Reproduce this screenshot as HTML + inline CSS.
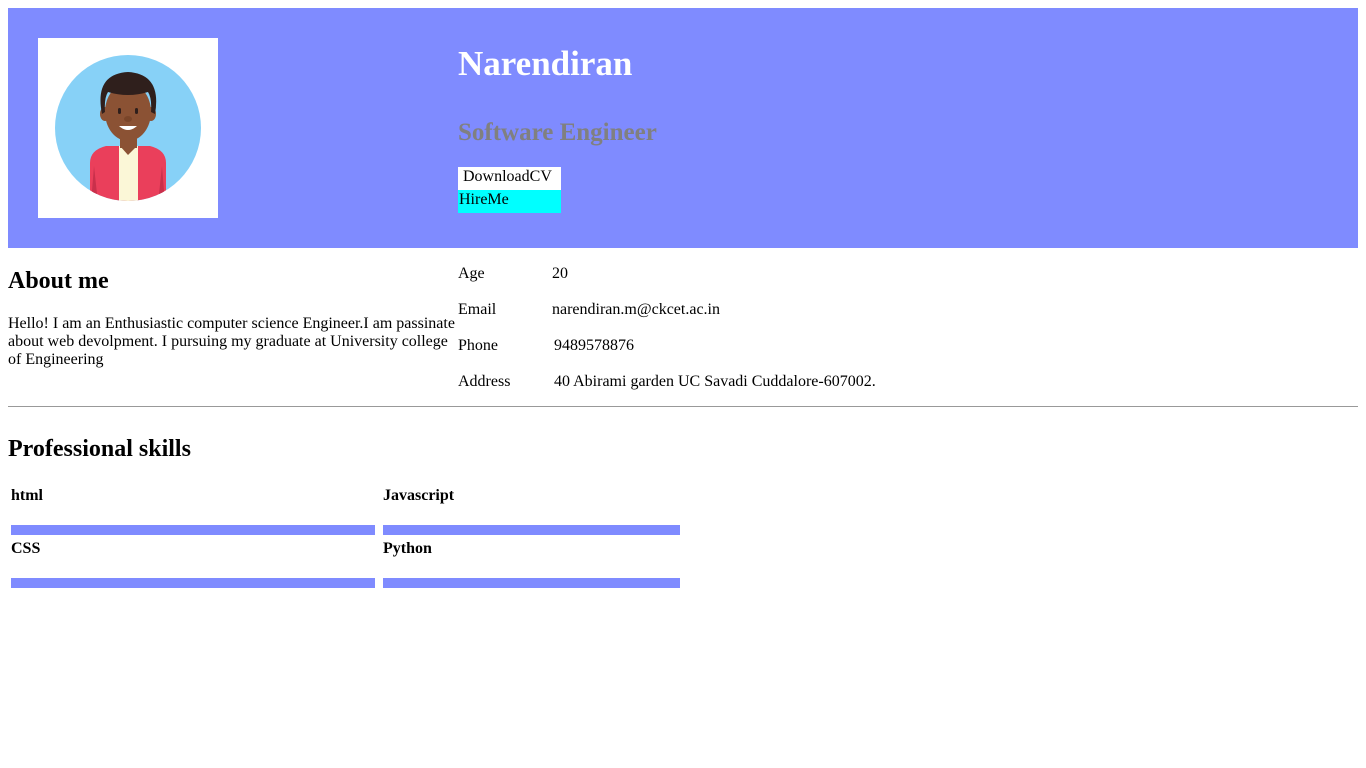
<!DOCTYPE html>
<html><head><style>
body{margin:0;font-family:"Liberation Serif",serif;font-size:16px;color:#000;background:#fff;width:1366px;height:768px;position:relative;overflow:hidden}
.a{position:absolute;white-space:nowrap;margin:0}
.bar{position:absolute;height:10px;background:#7f8bff}
</style></head><body>
<div class="a" style="left:8px;top:8px;width:1350px;height:240px;background:#7f8bff"></div>
<div class="a" style="left:38px;top:38px;width:180px;height:180px;background:#fff">
<svg width="180" height="180" viewBox="0 0 180 180">
<defs><clipPath id="c"><circle cx="90" cy="90" r="73"/></clipPath></defs>
<circle cx="90" cy="90" r="73" fill="#87d1f7"/>
<g clip-path="url(#c)">
<path d="M52 125 Q52 112 68 108 L112 108 Q128 112 128 125 L128 170 L52 170Z" fill="#ea3f5b"/>
<rect x="81" y="108" width="19" height="70" fill="#fbf7d7"/>
<rect x="82" y="92" width="17" height="18" fill="#8b5234"/>
<path d="M82 108 L90 117 L99 108" fill="#8b5234"/>
<path d="M56 128 L60 165 L53 165Z M124 128 L120 165 L127 165Z" fill="#c9304b"/>
</g>
<ellipse cx="67" cy="76" rx="5" ry="7" fill="#8b5234"/>
<ellipse cx="113" cy="76" rx="5" ry="7" fill="#8b5234"/>
<ellipse cx="90" cy="74" rx="23" ry="29" fill="#8b5234"/>
<path d="M64 76 Q56 36 90 34 Q124 36 117 76 L113 74 Q114 60 110 54 Q90 60 70 54 Q66 60 67 74Z" fill="#2f1f1c"/>
<rect x="80" y="70" width="3" height="6" rx="1.5" fill="#2f1f1c"/><rect x="97" y="70" width="3" height="6" rx="1.5" fill="#2f1f1c"/>
<ellipse cx="90" cy="81" rx="4" ry="3" fill="#7a4529"/>
<path d="M81 88 Q90 96 99 88Z" fill="#fff"/>
</svg></div>
<h1 class="a" style="left:458px;top:44px;font-size:35px;color:#fff">Narendiran</h1>
<h2 class="a" style="left:458px;top:119px;font-size:25px;color:#808080">Software Engineer</h2>
<div class="a" style="left:458px;top:167px;width:103px;height:23px;background:#fff"><span style="position:absolute;left:5px;top:1px">DownloadCV</span></div>
<div class="a" style="left:458px;top:190px;width:103px;height:23px;background:#0ff"><span style="position:absolute;left:1px;top:1px">HireMe</span></div>

<h2 class="a" style="left:8px;top:268px;font-size:24px">About me</h2>
<p class="a" style="left:8px;top:315px;width:450px;white-space:normal;line-height:18px">Hello! I am an Enthusiastic computer science Engineer.I am passinate about web devolpment. I pursuing my graduate at University college of Engineering</p>

<div class="a" style="left:458px;top:265px">Age</div><div class="a" style="left:552px;top:265px">20</div>
<div class="a" style="left:458px;top:301px">Email</div><div class="a" style="left:552px;top:301px">narendiran.m@ckcet.ac.in</div>
<div class="a" style="left:458px;top:337px">Phone</div><div class="a" style="left:554px;top:337px">9489578876</div>
<div class="a" style="left:458px;top:373px">Address</div><div class="a" style="left:554px;top:373px">40 Abirami garden UC Savadi Cuddalore-607002.</div>

<div class="a" style="left:8px;top:406px;width:1350px;height:0;border-top:1px solid #999"></div>
<h2 class="a" style="left:8px;top:436px;font-size:24px">Professional skills</h2>
<b class="a" style="left:11px;top:487px">html</b>
<b class="a" style="left:383px;top:487px">Javascript</b>
<div class="bar" style="left:11px;top:525px;width:364px"></div>
<div class="bar" style="left:383px;top:525px;width:297px"></div>
<b class="a" style="left:11px;top:540px">CSS</b>
<b class="a" style="left:383px;top:540px">Python</b>
<div class="bar" style="left:11px;top:578px;width:364px"></div>
<div class="bar" style="left:383px;top:578px;width:297px"></div>
</body></html>
